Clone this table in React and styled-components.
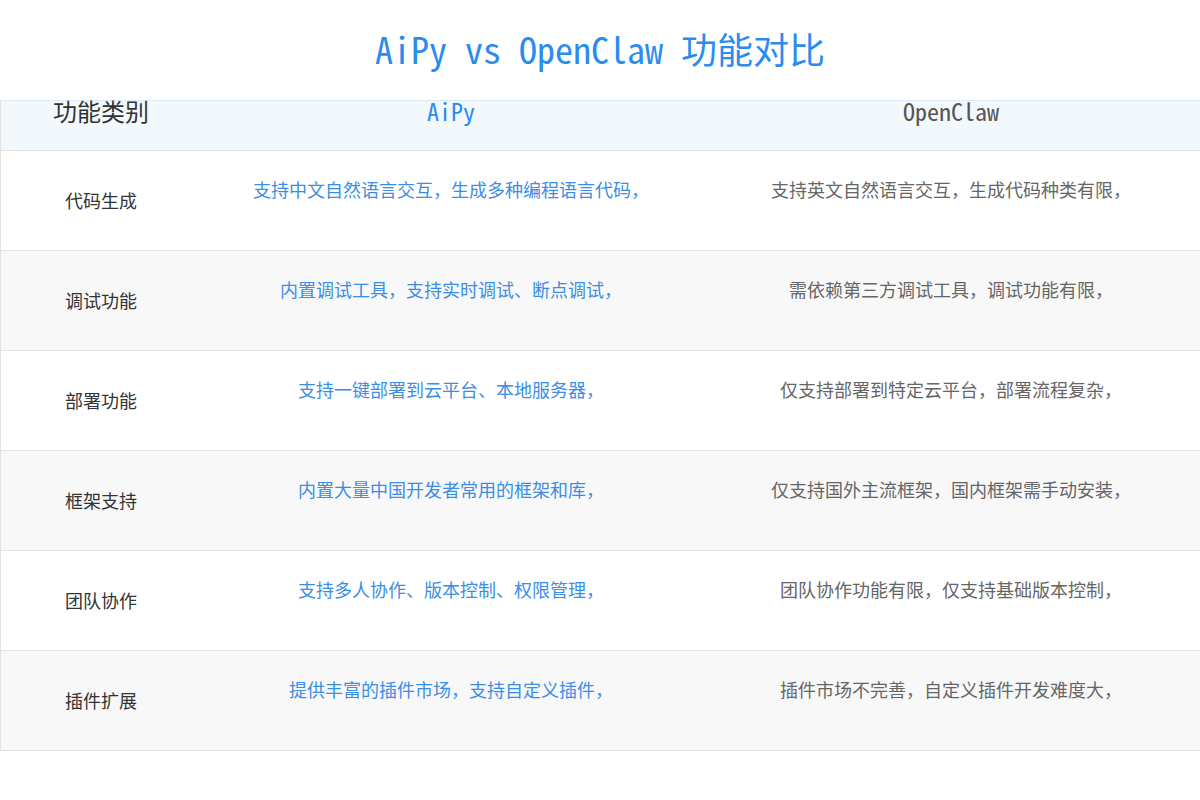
import React from "react";
import styled, { createGlobalStyle } from "styled-components";

const GlobalStyle = createGlobalStyle`
  html, body {
    margin: 0;
    padding: 0;
    background: #ffffff;
  }
  body {
    font-family: "Noto Sans CJK SC", "Noto Sans", sans-serif;
  }
`;

const rows = [
  {
    name: "代码生成",
    aipy: "支持中文自然语言交互，生成多种编程语言代码，",
    claw: "支持英文自然语言交互，生成代码种类有限，",
  },
  {
    name: "调试功能",
    aipy: "内置调试工具，支持实时调试、断点调试，",
    claw: "需依赖第三方调试工具，调试功能有限，",
  },
  {
    name: "部署功能",
    aipy: "支持一键部署到云平台、本地服务器，",
    claw: "仅支持部署到特定云平台，部署流程复杂，",
  },
  {
    name: "框架支持",
    aipy: "内置大量中国开发者常用的框架和库，",
    claw: "仅支持国外主流框架，国内框架需手动安装，",
  },
  {
    name: "团队协作",
    aipy: "支持多人协作、版本控制、权限管理，",
    claw: "团队协作功能有限，仅支持基础版本控制，",
  },
  {
    name: "插件扩展",
    aipy: "提供丰富的插件市场，支持自定义插件，",
    claw: "插件市场不完善，自定义插件开发难度大，",
  },
];

const Page = styled.div`
  width: 1200px;
  height: 800px;
  overflow: hidden;
`;

const Title = styled.h1`
  margin: 0;
  height: 100px;
  display: flex;
  align-items: center;
  justify-content: center;
  padding-bottom: 4px;
  box-sizing: border-box;
  font-family: "Noto Sans Mono CJK SC", "Noto Sans CJK SC", monospace;
  font-size: 36px;
  font-weight: 400;
  color: #2b8bef;
  white-space: pre;
`;

const Table = styled.div`
  display: grid;
  grid-template-columns: 200px 500px 500px;
  border-left: 1px solid #e3e3e3;
`;

const HeadCell = styled.div`
  height: 51px;
  box-sizing: border-box;
  background: #f3f8fd;
  border-top: 1px solid #dcebfa;
  border-bottom: 1px solid #e3e3e3;
  display: flex;
  justify-content: center;
  align-items: flex-start;
  line-height: 20px;
  font-size: 24px;
  font-weight: 400;
  font-family: ${(p) =>
    p.$mono
      ? `"Noto Sans Mono CJK SC", "Noto Sans CJK SC", monospace`
      : `"Noto Sans CJK SC", sans-serif`};
  color: ${(p) => p.$color};
  white-space: pre;
`;

const Cell = styled.div`
  height: 100px;
  box-sizing: border-box;
  background: ${(p) => (p.$alt ? "#f8f8f8" : "#ffffff")};
  border-bottom: 1px solid #e3e3e3;
  display: flex;
  justify-content: center;
  align-items: center;
  padding-bottom: ${(p) => (p.$desc ? "23px" : "2px")};
  font-size: 18px;
  line-height: 20px;
  color: ${(p) => p.$color};
  white-space: nowrap;
`;

export default function App() {
  return (
    <Page>
      <GlobalStyle />
      <Title>AiPy vs OpenClaw 功能对比</Title>
      <Table>
        <HeadCell $color="#333333">功能类别</HeadCell>
        <HeadCell $mono $color="#2b8bef">AiPy</HeadCell>
        <HeadCell $mono $color="#555555">OpenClaw</HeadCell>
        {rows.map((r, i) => (
          <React.Fragment key={r.name}>
            <Cell $alt={i % 2 === 1} $color="#333333">{r.name}</Cell>
            <Cell $alt={i % 2 === 1} $desc $color="#3a8ee6">{r.aipy}</Cell>
            <Cell $alt={i % 2 === 1} $desc $color="#666666">{r.claw}</Cell>
          </React.Fragment>
        ))}
      </Table>
    </Page>
  );
}
